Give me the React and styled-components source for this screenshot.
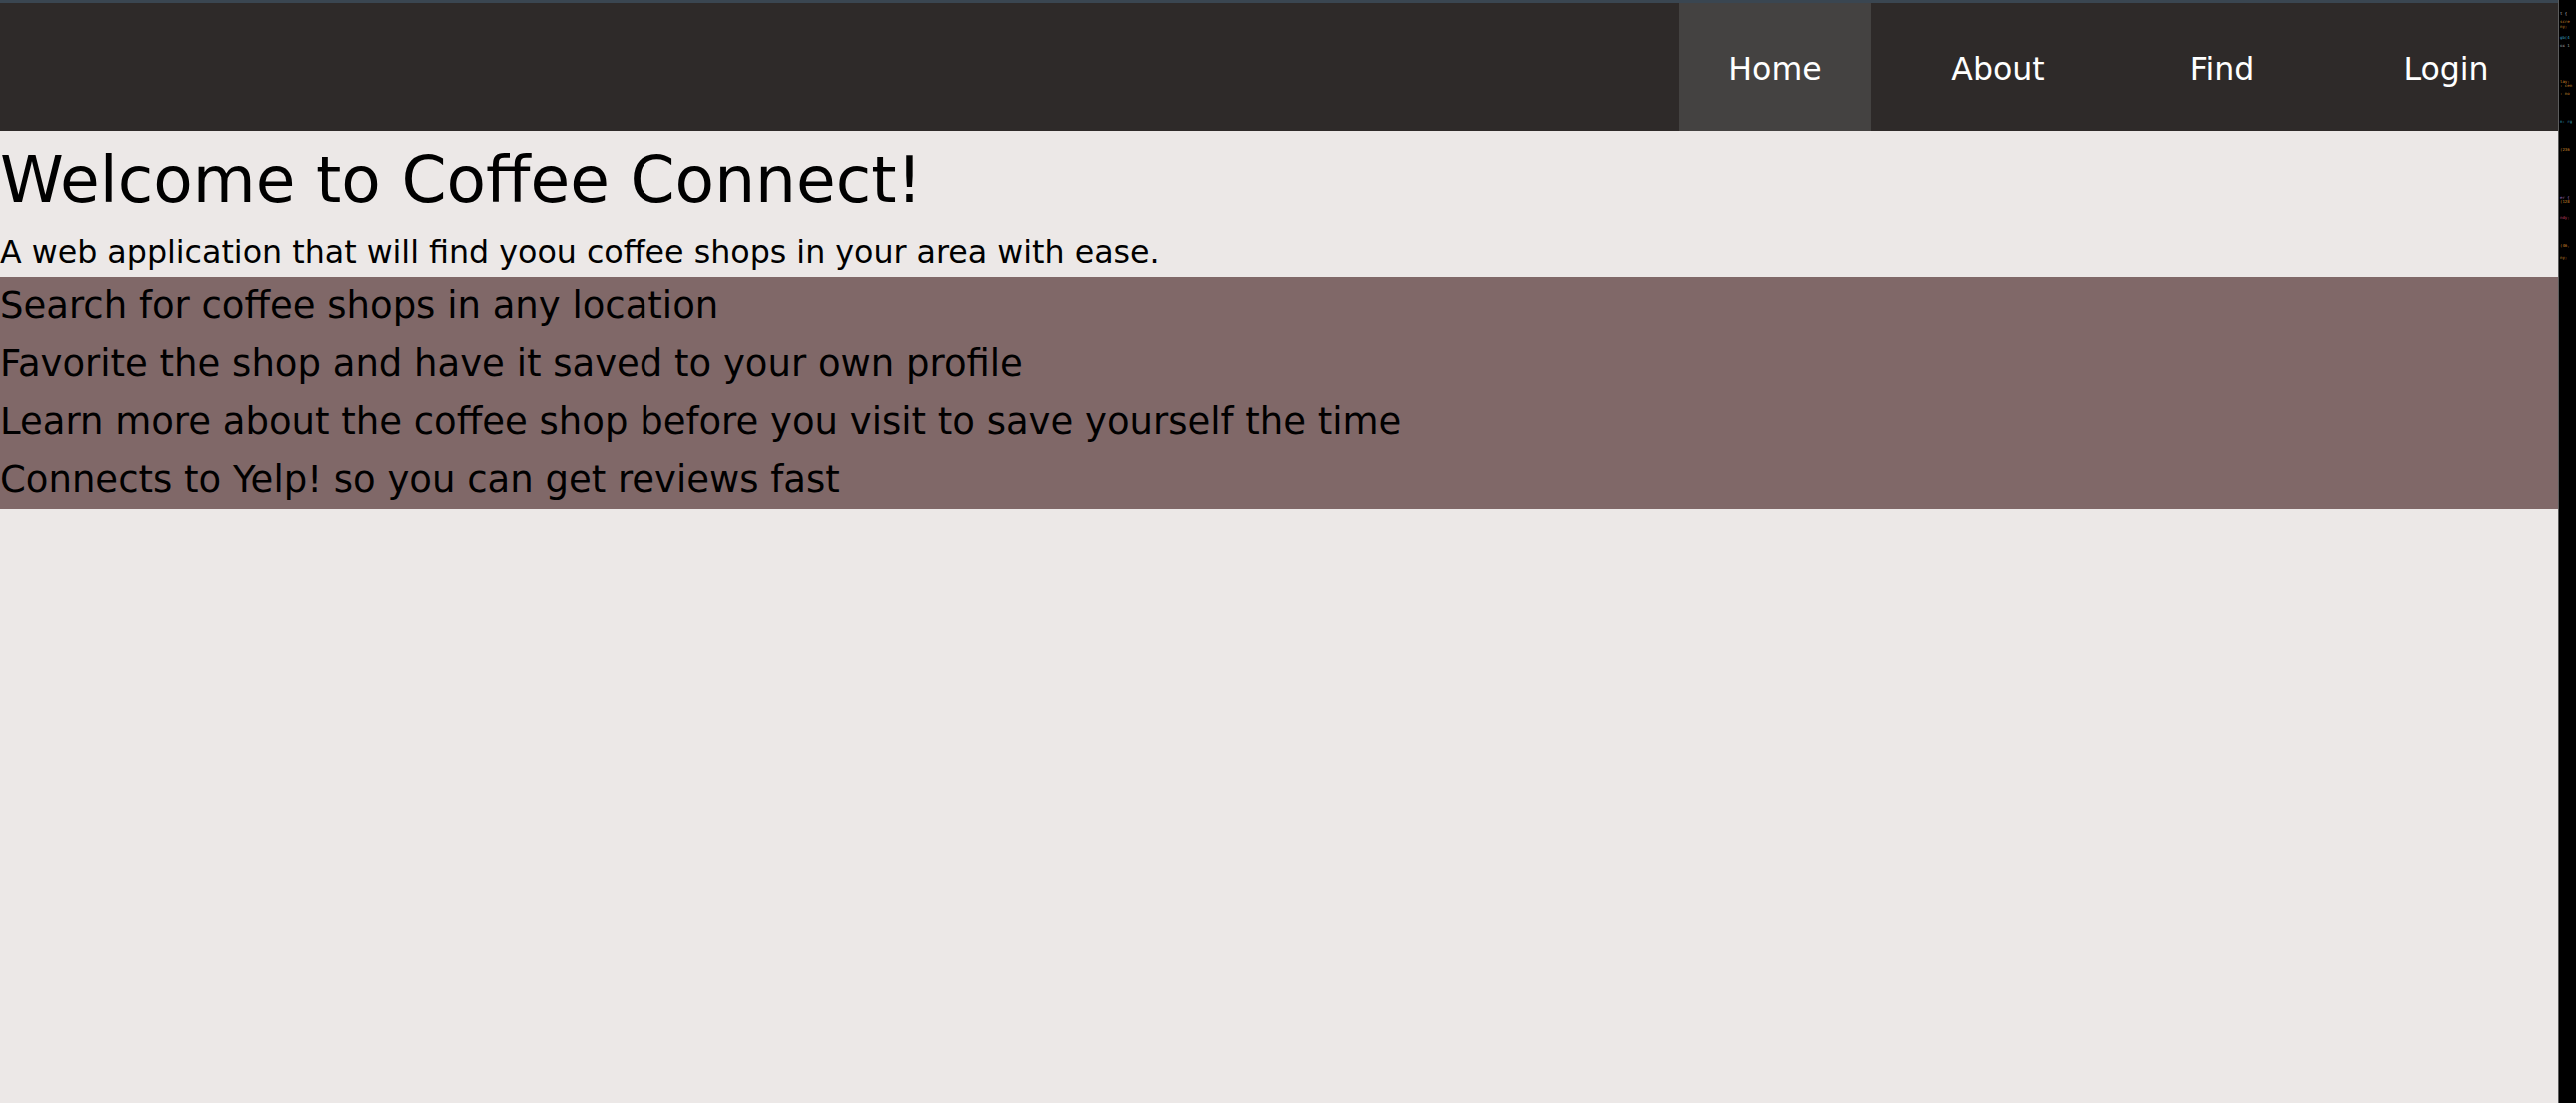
import styled, { createGlobalStyle } from "styled-components";

const GlobalStyle = createGlobalStyle`
    html, body {
        margin: 0;
        padding: 0;
        height: 100%;
    }

    body {
        font-family: "DejaVu Sans", "Noto Sans", sans-serif;
        background-color: #000;
    }
`;

const links = ["Home", "About", "Find", "Login"];

const features = [
    "Search for coffee shops in any location",
    "Favorite the shop and have it saved to your own profile",
    "Learn more about the coffee shop before you visit to save yourself the time",
    "Connects to Yelp! so you can get reviews fast",
];

// little bits of code peeking in from the editor pane on the right
const codeBits = [
    { top: 12, color: "#c7c7c7", text: "t {" },
    { top: 20, color: "#d08a2c", text: "scre" },
    { top: 25, color: "#d08a2c", text: "ny;" },
    { top: 36, color: "#3aa3c2", text: "gb(4" },
    { top: 44, color: "#a0a0a0", text: "ox 1" },
    { top: 80, color: "#d08a2c", text: "lay;" },
    { top: 84, color: "#d08a2c", text: ": cen" },
    { top: 92, color: "#d08a2c", text: ": no" },
    { top: 120, color: "#3aa3c2", text: "n: rg" },
    { top: 148, color: "#d08a2c", text: "(236" },
    { top: 196, color: "#a070c0", text: "er {" },
    { top: 200, color: "#d08a2c", text: "(128" },
    { top: 216, color: "#c04060", text: "ndy;" },
    { top: 244, color: "#d08a2c", text: "(46," },
    { top: 256, color: "#d08a2c", text: "ny;" },
];

const App = () => {
    return (
        <>
            <GlobalStyle />
            <Frame>
                <Page>
                    <NavBar>
                        <NavList>
                            {links.map((link, i) => (
                                <NavItem key={link} active={i === 0}>
                                    {link}
                                </NavItem>
                            ))}
                        </NavList>
                    </NavBar>
                    <Title>Welcome to Coffee Connect!</Title>
                    <Subtitle>
                        A web application that will find yoou coffee shops in your area with ease.
                    </Subtitle>
                    <Features>
                        {features.map((f) => (
                            <Feature key={f}>{f}</Feature>
                        ))}
                    </Features>
                </Page>
                <EditorPane>
                    {codeBits.map((bit) => (
                        <CodeBit key={bit.top} style={{ top: bit.top, color: bit.color }}>
                            {bit.text}
                        </CodeBit>
                    ))}
                </EditorPane>
            </Frame>
        </>
    );
};

export default App;

const Frame = styled.div`
    display: flex;
    height: 100vh;
    overflow: hidden;
`;

const Page = styled.main`
    flex: 1;
    min-width: 0;
    border-top: 3px solid #3a4651;
    background-color: #ece8e7;
    color: #000;
`;

const NavBar = styled.nav`
    height: 128px;
    background-color: #2e2a29;
    display: flex;
    justify-content: flex-end;
`;

const NavList = styled.ul`
    display: flex;
    list-style: none;
    margin: 0;
    padding: 0;
`;

const NavItem = styled.li`
    width: 192px;
    margin: 0 16px;
    padding-top: 4px;
    box-sizing: border-box;
    line-height: 124px;
    text-align: center;
    font-size: 31.6px;
    color: #ffffff;
    cursor: pointer;
    background-color: ${(props) => (props.active ? "#444241" : "transparent")};

    &:hover {
        background-color: #444241;
    }
`;

const Title = styled.h1`
    margin: 0;
    font-size: 64.6px;
    font-weight: normal;
    line-height: 97px;
    white-space: nowrap;
`;

const Subtitle = styled.p`
    margin: 0 0 1px;
    font-size: 31.7px;
    line-height: 48px;
    white-space: nowrap;
`;

const Features = styled.div`
    background-color: #806868;
`;

const Feature = styled.p`
    margin: 0;
    font-size: 37px;
    line-height: 58px;
    white-space: nowrap;
`;

const EditorPane = styled.aside`
    position: relative;
    width: 17px;
    flex-shrink: 0;
    background-color: #000;
    border-left: 1px solid #5b5b5b;
`;

const CodeBit = styled.span`
    position: absolute;
    left: 1px;
    font-family: "DejaVu Sans Mono", monospace;
    font-size: 4px;
    line-height: 4px;
    white-space: nowrap;
`;
